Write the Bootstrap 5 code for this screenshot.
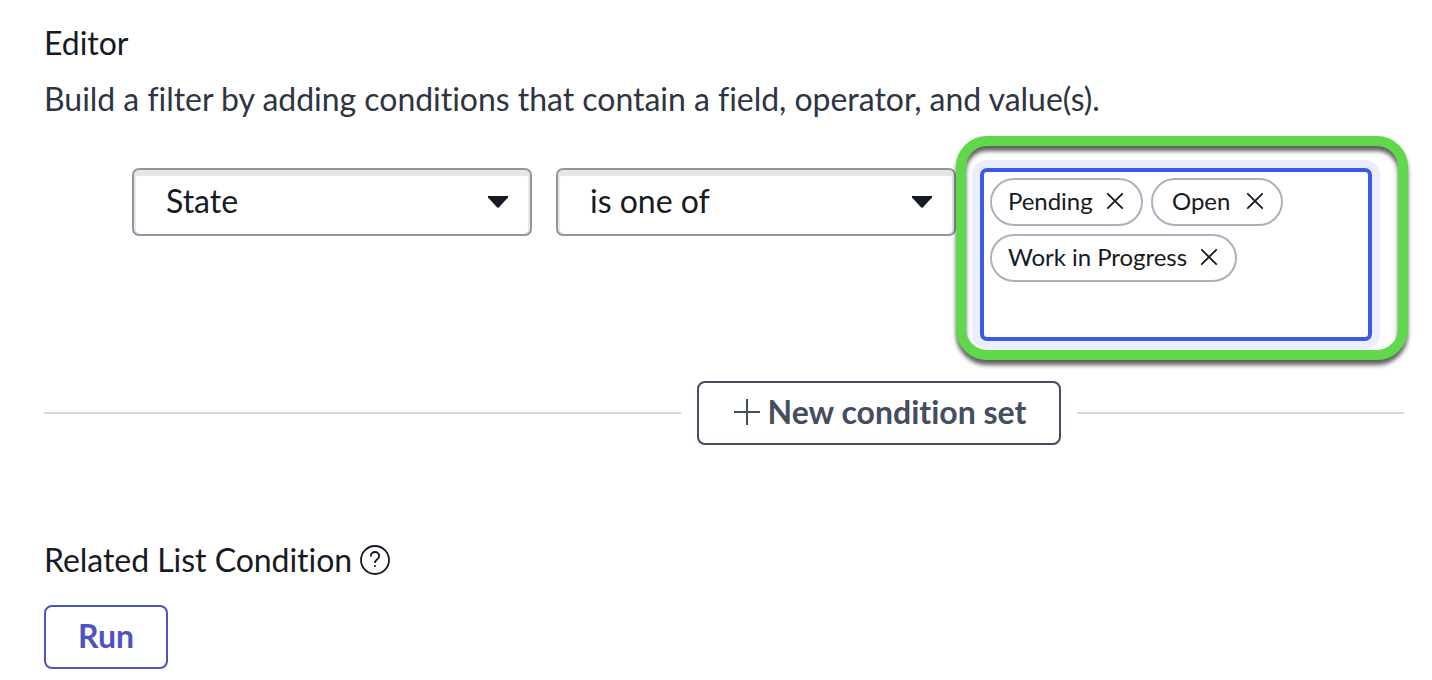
<!DOCTYPE html>
<html lang="en">
<head>
<meta charset="utf-8">
<meta name="viewport" content="width=device-width, initial-scale=1">
<title>Condition editor</title>
<link rel="stylesheet" href="https://cdn.jsdelivr.net/npm/bootstrap@5.3.0/dist/css/bootstrap.min.css">
<style>
  body { font: 400 32px/40px Lato, "Liberation Sans", sans-serif; color: #161b23; background: #fff; overflow: hidden; }
  body, button { font-variant-ligatures: none; }
  .editor { padding: 23px 28px 0 44px; }
  .hint { color: #2e3442; letter-spacing: -.03px; }
  .editor h2, .editor h3 { font-size: 32px; font-weight: 400; line-height: 40px; letter-spacing: -.04px; }
  .conditions { margin: 49px 32px 0 88px; height: 173px; gap: 24px; }
  .picker { width: 400px; height: 68px; padding: 0 22px 2px 32px; border: 2px solid #9095a3; border-radius: 7px; box-shadow: inset 0 6px #e6e6e6, inset 2px 0 #e6e6e6, inset -2px 0 #e6e6e6; color: inherit; background: #fff; text-align: left; }
  .picker svg { margin-top: 2px; }
  .values { position: relative; width: 392px; height: 173px; padding: 6px; gap: 8px; border: 4px solid #3c59e7; border-radius: 7px; box-shadow: 0 0 0 8px #ebeefd; }
  .callout-ring { position: absolute; z-index: 2; left: -28px; top: -36px; width: 452px; height: 224px; border: 10px solid #60d84b; border-radius: 31px; pointer-events: none; filter: drop-shadow(0 5px 2px rgba(0,0,0,.62)); }
  .pill { height: 48px; padding: 0 17px 3px 16px; border: 2px solid #abb0bd; border-radius: 24px; font-size: 24px; letter-spacing: -.04px; }
  .pill-short { padding-left: 19px; }
  .new-set { margin-top: 40px; gap: 16px; }
  .rule { height: 2px; background: #d6d8de; }
  .rule-end { width: 327px; }
  .action { --bs-btn-font-size: 32px; --bs-btn-line-height: 40px; --bs-btn-font-weight: 700; --bs-btn-border-width: 2px; --bs-btn-border-radius: 8px; height: 64px; padding: 0 0 2px; }
  .action-set { --bs-btn-color: #444e5f; --bs-btn-border-color: #444e5f; width: 364px; padding-left: 2px; }
  .action-run { --bs-btn-color: #5153bd; --bs-btn-border-color: #5153bd; width: 124px; margin-top: 25px; }
  .related { margin-top: 95px; gap: 8px; }
</style>
</head>
<body>
<main class="editor">
  <h2 class="mb-3">Editor</h2>
  <p class="hint m-0 text-nowrap">Build a filter by adding conditions that contain a field, operator, and value(s).</p>

  <div class="conditions d-flex align-items-start">
    <button type="button" class="picker d-flex align-items-center justify-content-between flex-shrink-0">
      <span>State</span>
      <svg width="20" height="12" viewBox="0 0 20 12" fill="#161b23"><path d="M0 0h20v1.5L10.8 11.4q-.8.8-1.6 0L0 1.5z"/></svg>
    </button>
    <button type="button" class="picker d-flex align-items-center justify-content-between flex-shrink-0">
      <span>is one of</span>
      <svg width="20" height="12" viewBox="0 0 20 12" fill="#161b23"><path d="M0 0h20v1.5L10.8 11.4q-.8.8-1.6 0L0 1.5z"/></svg>
    </button>
    <div class="values d-flex flex-wrap align-content-start flex-shrink-0">
      <span class="pill d-inline-flex align-items-center justify-content-between" style="width:153px">Pending
        <svg width="18" height="18" viewBox="0 0 18 18" fill="none" stroke="#161b23" stroke-width="1.8" stroke-linecap="round"><path d="M1.8 1.8l14.4 14.4M16.2 1.8L1.8 16.2"/></svg></span>
      <span class="pill pill-short d-inline-flex align-items-center justify-content-between" style="width:132px">Open
        <svg width="18" height="18" viewBox="0 0 18 18" fill="none" stroke="#161b23" stroke-width="1.8" stroke-linecap="round"><path d="M1.8 1.8l14.4 14.4M16.2 1.8L1.8 16.2"/></svg></span>
      <span class="pill d-inline-flex align-items-center justify-content-between" style="width:247px">Work in Progress
        <svg width="18" height="18" viewBox="0 0 18 18" fill="none" stroke="#161b23" stroke-width="1.8" stroke-linecap="round"><path d="M1.8 1.8l14.4 14.4M16.2 1.8L1.8 16.2"/></svg></span>
      <div class="callout-ring"></div>
    </div>
  </div>

  <div class="new-set d-flex align-items-center">
    <div class="rule flex-grow-1"></div>
    <button type="button" class="btn action action-set d-flex align-items-center justify-content-center">
      <svg class="me-2" width="26" height="26" viewBox="0 0 26 26" fill="none" stroke="#444e5f" stroke-width="2"><path d="M13 0v26M0 13h26"/></svg>
      <span>New condition set</span>
    </button>
    <div class="rule rule-end"></div>
  </div>

  <div class="related d-flex align-items-center">
    <h3 class="m-0">Related List Condition</h3>
    <svg width="30" height="30" viewBox="0 0 30 30" fill="none" stroke="#161b23" stroke-width="1.8"><circle cx="15" cy="15" r="14"/><path d="M10.8 11.4c0-2.8 1.8-4.4 4.2-4.4s4.2 1.7 4.2 3.9c0 3.4-4.2 3.4-4.2 7.1"/><circle cx="15" cy="21" r="1.1" fill="#161b23" stroke="none"/></svg>
  </div>
  <button type="button" class="btn action action-run">Run</button>
</main>
<script src="https://cdn.jsdelivr.net/npm/bootstrap@5.3.0/dist/js/bootstrap.bundle.min.js"></script>
</body>
</html>
